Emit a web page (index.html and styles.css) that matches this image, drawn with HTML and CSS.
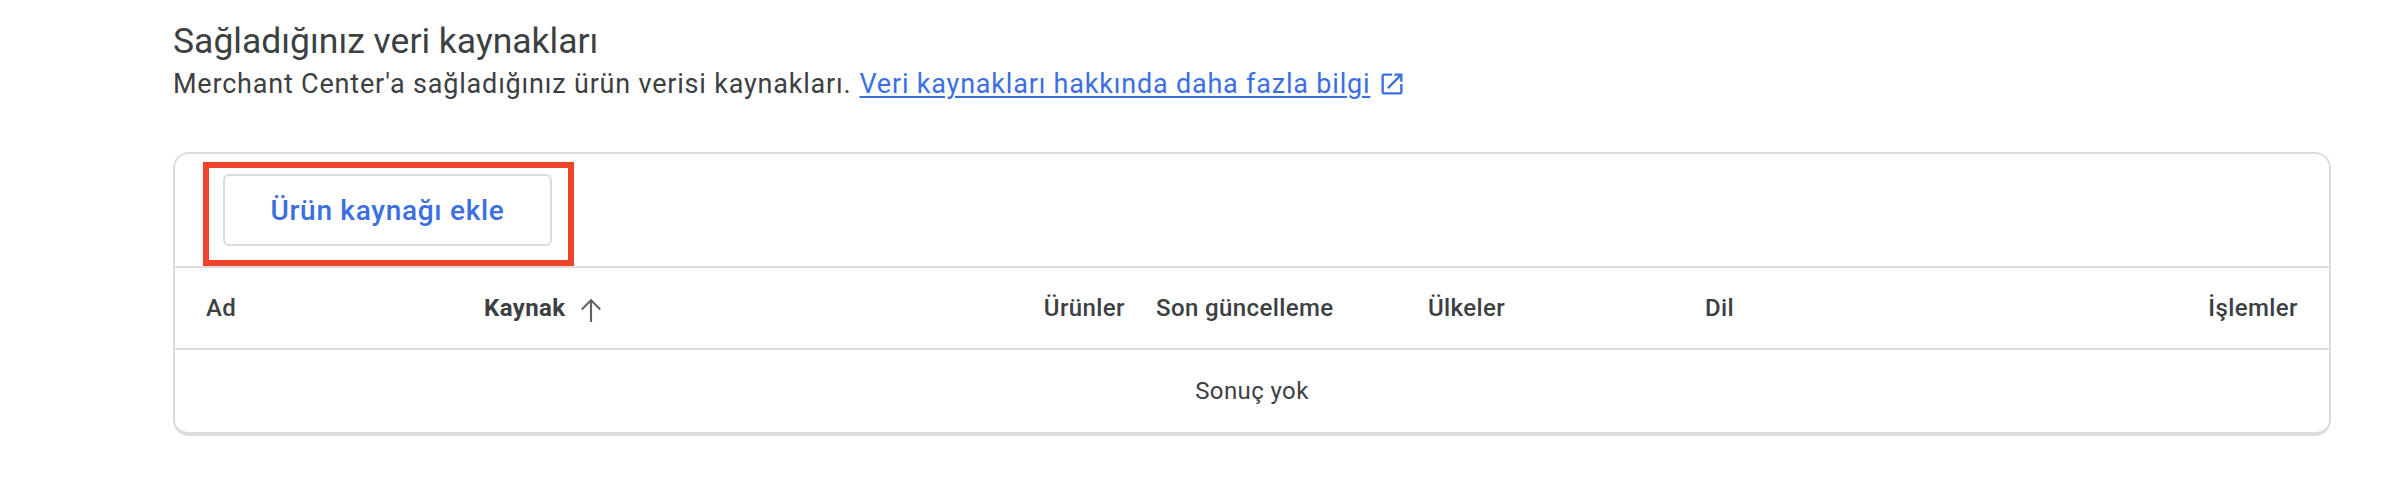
FILE: index.html
```html
<!DOCTYPE html>
<html lang="tr">
<head>
    <meta charset="UTF-8">
    <title>Sağladığınız veri kaynakları</title>
    <link rel="stylesheet" href="styles.css">
</head>
<body>

<section class="sources">
    <h2 class="sources-title">Sağladığınız veri kaynakları</h2>
    <p class="sources-desc">
        Merchant Center'a sağladığınız ürün verisi kaynakları.
        <a class="sources-link" href="#">Veri kaynakları hakkında daha fazla bilgi</a>
        <svg class="link-icon" viewBox="0 0 24 24" width="28" height="28" aria-hidden="true">
            <path d="M19 19H5V5h7V3H5a2 2 0 0 0-2 2v14a2 2 0 0 0 2 2h14a2 2 0 0 0 2-2v-7h-2v7zM14 3v2h3.59l-9.83 9.83 1.41 1.41L19 6.41V10h2V3h-7z"/>
        </svg>
    </p>

    <div class="card">
        <div class="toolbar">
            <div class="highlight">
                <button class="add-button">Ürün kaynağı ekle</button>
            </div>
        </div>
        <table class="table">
            <colgroup>
                <col class="col-name">
                <col class="col-source">
                <col class="col-products">
                <col class="col-updated">
                <col class="col-countries">
                <col class="col-language">
                <col>
            </colgroup>
            <thead>
                <tr>
                    <th>Ad</th>
                    <th class="sorted">
                        <span class="sort-label">Kaynak
                            <svg class="sort-icon" viewBox="0 0 24 24" width="32" height="32" aria-hidden="true">
                                <path d="M12 3.5 4.5 11l1.1 1.1 5.6-5.6V21h1.6V6.5l5.6 5.6 1.1-1.1z"/>
                            </svg>
                        </span>
                    </th>
                    <th class="align-right">Ürünler</th>
                    <th class="no-pad">Son güncelleme</th>
                    <th>Ülkeler</th>
                    <th>Dil</th>
                    <th class="align-right">İşlemler</th>
                </tr>
            </thead>
            <tbody>
                <tr>
                    <td class="empty" colspan="7">Sonuç yok</td>
                </tr>
            </tbody>
        </table>
    </div>
</section>

</body>
</html>
```

FILE: styles.css
```css
body {
    font-family: Roboto, sans-serif;
    background-color: #fff;
    color: #3c4043;
    margin: 0;
}

.sources {
    padding: 20px 77px 0 173px;
}

.sources-title {
    font-size: 35.5px;
    line-height: 42px;
    font-weight: 400;
    margin: 0;
}

.sources-desc {
    display: flex;
    align-items: center;
    gap: 8px;
    font-size: 27px;
    line-height: 36px;
    letter-spacing: 0.8px;
    margin: 4px 0 0;
}

.sources-link {
    color: #3b6fdf;
    text-decoration: underline;
    text-underline-offset: 3px;
}

.link-icon {
    fill: #3b6fdf;
}

.card {
    margin-top: 50px;
    border: 2px solid #dadce0;
    border-bottom-width: 4px;
    border-radius: 16px;
}

.toolbar {
    padding: 8px 0 0 28px;
    border-bottom: 2px solid #dadce0;
}

.highlight {
    display: inline-block;
    vertical-align: top;
    padding: 6px 16px 14px 14px;
    border: 6px solid #ee4329;
}

.add-button {
    display: block;
    width: 329px;
    height: 72px;
    font-family: inherit;
    font-size: 28px;
    font-weight: 500;
    letter-spacing: 0.7px;
    color: #3b6fdf;
    background-color: #fff;
    border: 2px solid #dadce0;
    border-radius: 6px;
}

.table {
    width: 100%;
    border-collapse: collapse;
    table-layout: fixed;
}

.col-name { width: 278px; }
.col-source { width: 426px; }
.col-products { width: 277px; }
.col-updated { width: 241px; }
.col-countries { width: 277px; }
.col-language { width: 277px; }

.table th {
    height: 80px;
    padding: 0 31px;
    font-size: 24px;
    font-weight: 500;
    letter-spacing: 0.4px;
    text-align: left;
    border-bottom: 2px solid #dadce0;
}

.table th.sorted {
    font-weight: 700;
    white-space: nowrap;
}

.table th.align-right {
    text-align: right;
}

.table th.no-pad {
    padding: 0;
}

.sort-label {
    display: inline-flex;
    align-items: center;
    gap: 9px;
}

.sort-icon {
    fill: #5f6368;
    margin-top: 4px;
}

.empty {
    height: 80px;
    font-size: 24px;
    letter-spacing: 0.4px;
    text-align: center;
}
```
